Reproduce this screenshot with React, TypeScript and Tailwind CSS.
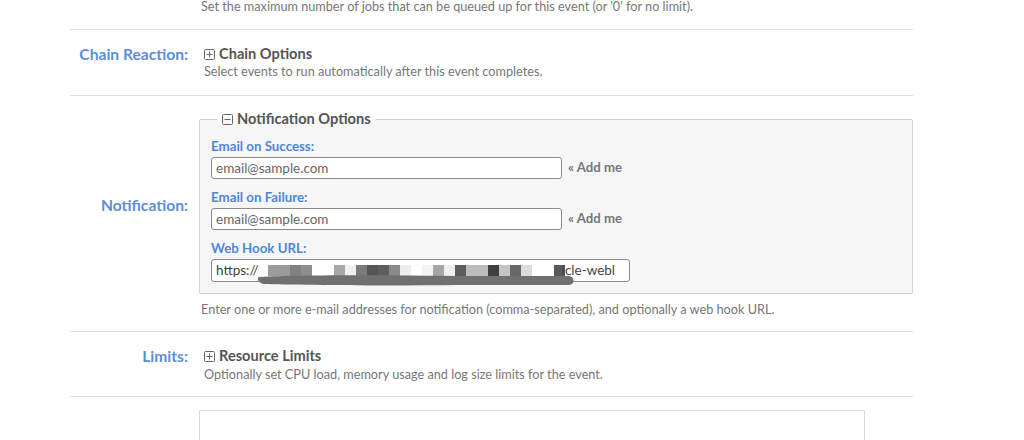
const blocks = [
  '#9c9c9c', '#9a9a9a', '#808080', '#8e8e8e', '#ffffff', '#ffffff', '#a8a8a8', '#f0f0f0', '#7a7a7a',
  '#555555', '#5e5e5e', '#8a8a8a', '#eeeeee', '#ffffff', '#f4f4f4', '#a6a6a6', '#eeeeee', '#5c5c5c',
  '#bdbdbd', '#bdbdbd', '#3f3f3f', '#c4c4c4', '#686868', '#dcdcdc', '#ffffff', '#ffffff', '#595959',
]

function BoxIcon({ open }: { open?: boolean }) {
  return (
    <svg width="11" height="11" viewBox="0 0 11 11" className="shrink-0">
      <rect x="0.5" y="0.5" width="10" height="10" rx="1" fill="none" stroke="#666" />
      <path d="M2.5 5.5h6" stroke="#666" />
      {!open && <path d="M5.5 2.5v6" stroke="#666" />}
    </svg>
  )
}

function Heading({ open, children }: { open?: boolean; children: string }) {
  return (
    <div className="flex items-center gap-[4px] text-[14.6px] leading-[18px] font-bold text-[#555]">
      <BoxIcon open={open} />
      <span>{children}</span>
    </div>
  )
}

function Help({ children, className = 'leading-[16px]' }: { children: string; className?: string }) {
  return <p className={`text-[12.7px] text-[#777] ${className}`}>{children}</p>
}

function Label({ children, className = '' }: { children: string; className?: string }) {
  return (
    <div className={`w-[118px] shrink-0 text-right text-[15.6px] leading-[18px] font-bold text-[#5b8fd9] ${className}`}>
      {children}
    </div>
  )
}

function EmailField({ label, top }: { label: string; top: string }) {
  return (
    <div className={top}>
      <div className="text-[13.3px] leading-[16px] font-bold text-[#4f86d6]">{label}</div>
      <div className="mt-[3px] flex items-center">
        <div className="w-[351px] h-[22px] bg-white border border-[#8a8a8a] rounded-[3px] px-[4px] flex items-center text-[13.5px] text-[#666]">
          email@sample.com
        </div>
        <span className="ml-[6px] text-[13.2px] font-bold text-[#777]">« Add me</span>
      </div>
    </div>
  )
}

export default function App() {
  return (
    <div className="w-[1024px] h-[440px] overflow-hidden bg-white font-['Lato','Open_Sans',sans-serif]">
      <div className="ml-[70px] w-[843px]">
        <div className="h-[30px] border-b border-[#e0e0e0] pl-[131px]">
          <Help className="leading-[12px]">Set the maximum number of jobs that can be queued up for this event (or '0' for no limit).</Help>
        </div>

        <div className="h-[66px] flex border-b border-[#e0e0e0] pt-[15px]">
          <Label>Chain Reaction:</Label>
          <div className="ml-[16px]">
            <Heading>Chain Options</Heading>
            <Help>Select events to run automatically after this event completes.</Help>
          </div>
        </div>

        <div className="h-[236px] flex border-b border-[#e0e0e0]">
          <Label className="mt-[100px]">Notification:</Label>
          <div className="ml-[11px] w-[714px] pt-[14px]">
            <fieldset className="border border-[#d2d2d2] bg-[#f6f6f6] px-[11px] pb-[11px] rounded-[2px]">
              <legend className="ml-[6px] px-[5px]">
                <Heading open>Notification Options</Heading>
              </legend>
              <EmailField label="Email on Success:" top="mt-[10px]" />
              <EmailField label="Email on Failure:" top="mt-[10px]" />
              <div className="mt-[10px] relative">
                <div className="text-[13.3px] leading-[16px] font-bold text-[#4f86d6]">Web Hook URL:</div>
                <div className="mt-[3px] w-[419px] h-[23px] bg-white border border-[#8a8a8a] rounded-[3px] px-[4px] flex items-center overflow-hidden text-[13.5px] text-[#444] whitespace-nowrap">
                  <span>https://</span>
                  <span className="flex ml-[9px] h-[11px]">
                    {blocks.map((c, i) => (
                      <span key={i} className="w-[11px] h-[11px]" style={{ background: c }} />
                    ))}
                  </span>
                  <span className="ml-[-3px]">icle-webl</span>
                </div>
                <svg className="absolute left-[46px] top-[33px]" width="320" height="14" viewBox="0 0 320 14">
                  <path d="M2 4 C40 2 120 2 200 3 L312 3 C318 3 318 12 312 12 L200 12 C120 13 40 12 6 11 C0 9 0 5 2 4 Z" fill="#707070" />
                </svg>
              </div>
            </fieldset>
            <div className="mt-[7px] pl-[2px]">
              <Help>Enter one or more e-mail addresses for notification (comma-separated), and optionally a web hook URL.</Help>
            </div>
          </div>
        </div>

        <div className="h-[65px] flex border-b border-[#e0e0e0] pt-[15px]">
          <Label>Limits:</Label>
          <div className="ml-[16px]">
            <Heading>Resource Limits</Heading>
            <div className="mt-[1px]">
              <Help>Optionally set CPU load, memory usage and log size limits for the event.</Help>
            </div>
          </div>
        </div>

        <div className="mt-[13px] ml-[129px] w-[666px] h-[60px] border border-[#dcdcdc]" />
      </div>
    </div>
  )
}
